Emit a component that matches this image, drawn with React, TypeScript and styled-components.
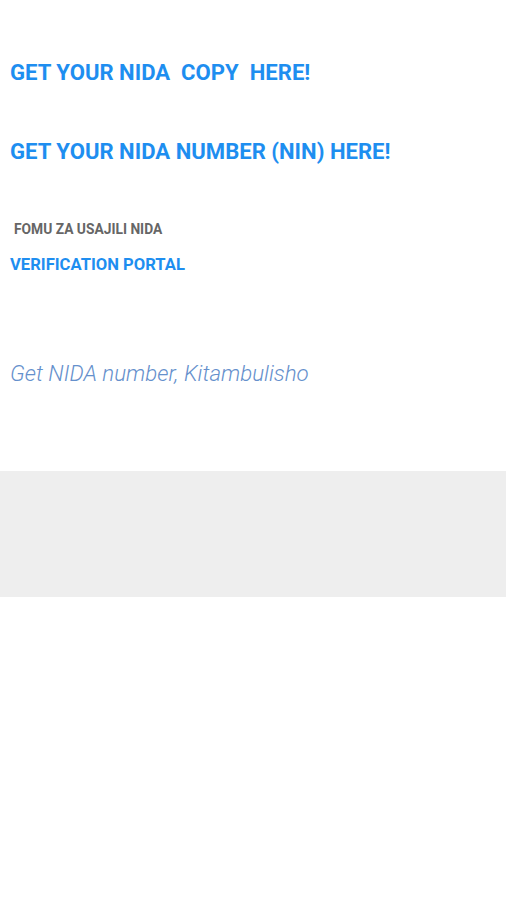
import styled, { createGlobalStyle } from "styled-components";

const GlobalStyle = createGlobalStyle`
  html, body {
    margin: 0;
    padding: 0;
    background: #ffffff;
    font-family: Roboto, "Noto Sans", sans-serif;
  }
`;

export default function App() {
  return (
    <>
      <GlobalStyle />
      <Page>
        <Content>
          <Headline $top={58}>GET YOUR NIDA&nbsp; COPY&nbsp; HERE!</Headline>
          <Headline $top={51}>GET YOUR NIDA NUMBER (NIN) HERE!</Headline>
          <SmallLabel>FOMU ZA USAJILI NIDA</SmallLabel>
          <PortalLink>VERIFICATION PORTAL</PortalLink>
          <Tagline>Get NIDA number, Kitambulisho</Tagline>
        </Content>
        <AdBand />
      </Page>
    </>
  );
}

const Page = styled.div`
  width: 506px;
  min-height: 900px;
  background: #ffffff;
  display: flex;
  flex-direction: column;
`;

const Content = styled.div`
  display: flex;
  flex-direction: column;
  align-items: flex-start;
  padding: 0 10px;
`;

const Headline = styled.div<{ $top: number }>`
  margin-top: ${(p) => p.$top}px;
  font-size: 22.1px;
  line-height: 28px;
  font-weight: 700;
  color: #1e8ef0;
  white-space: nowrap;
`;

const SmallLabel = styled.div`
  margin-top: 55px;
  padding-left: 4px;
  font-size: 13.8px;
  line-height: 18px;
  font-weight: 700;
  color: #666666;
`;

const PortalLink = styled.div`
  margin-top: 17px;
  font-size: 16.6px;
  line-height: 20px;
  font-weight: 700;
  color: #1e8ef0;
`;

const Tagline = styled.div`
  margin-top: 84px;
  font-size: 22.3px;
  line-height: 28px;
  font-weight: 300;
  font-style: italic;
  color: #6590cc;
`;

const AdBand = styled.div`
  margin-top: 84px;
  height: 126px;
  background: #eeeeee;
`;
